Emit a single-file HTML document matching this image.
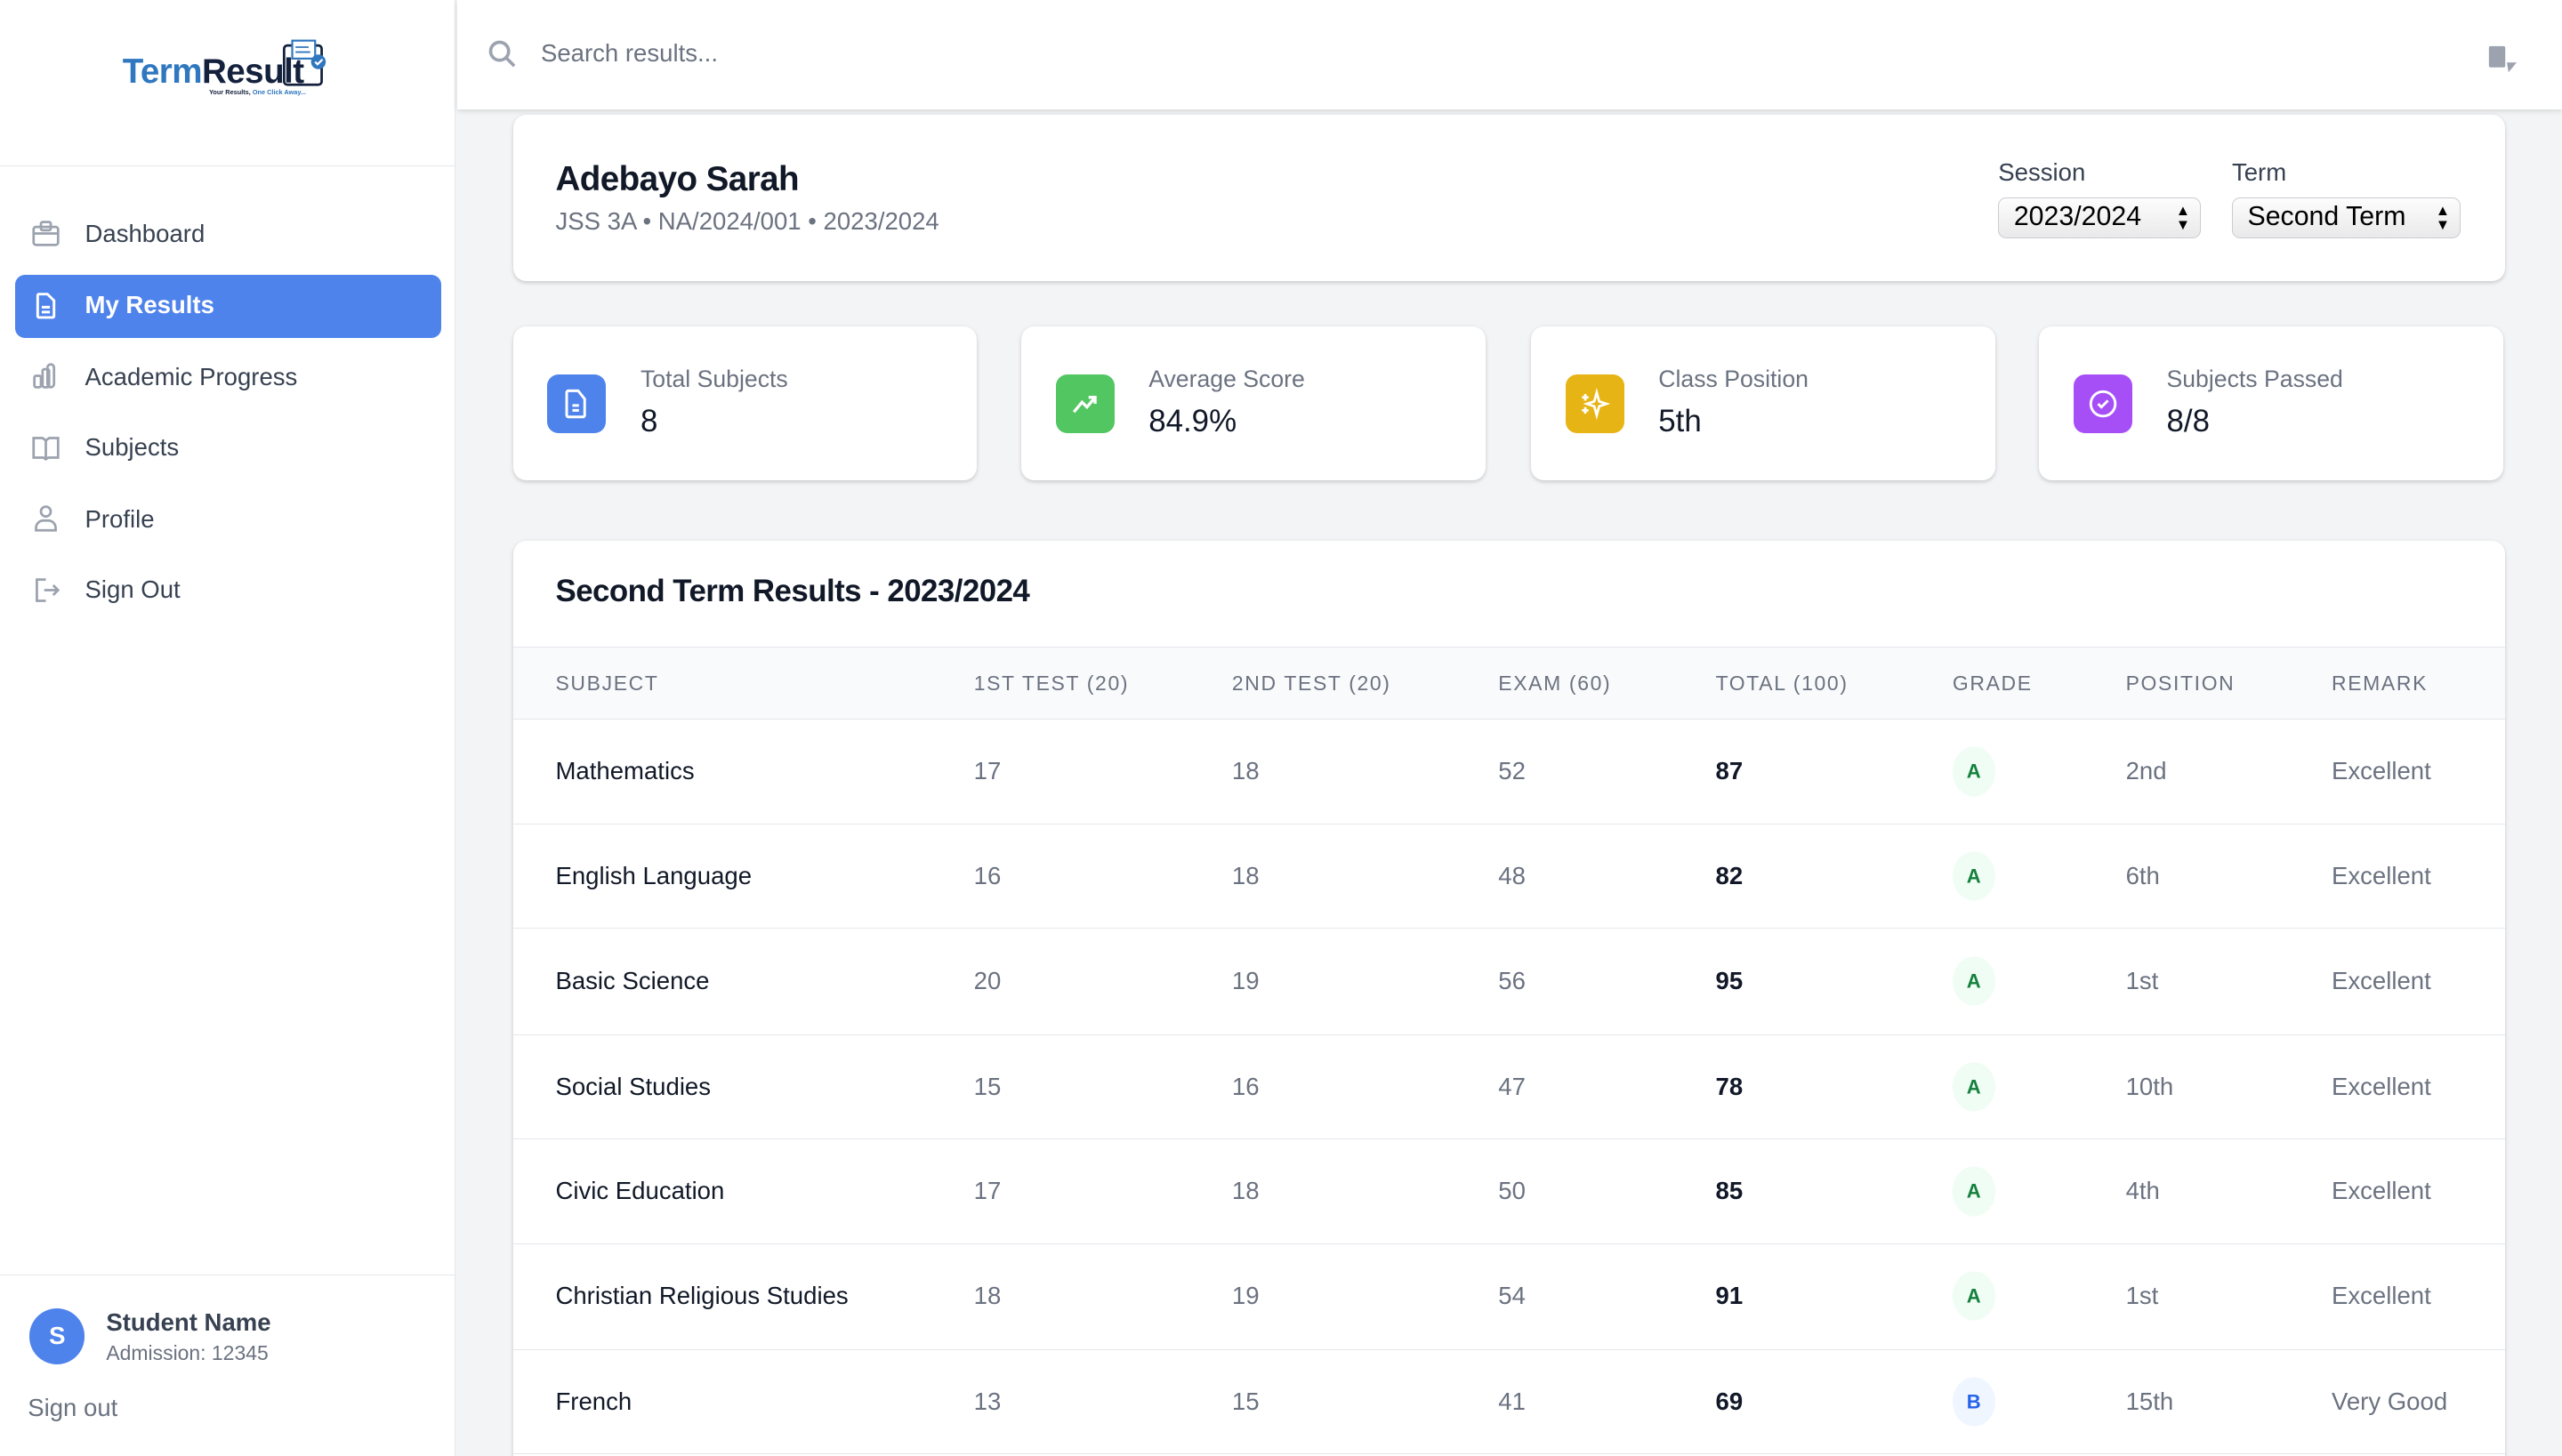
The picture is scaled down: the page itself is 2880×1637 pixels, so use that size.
<!DOCTYPE html>
<html><head><meta charset="utf-8"><style>
*{margin:0;padding:0;box-sizing:border-box}
html,body{width:2880px;height:1636px;overflow:hidden;background:#f3f4f6}
#w{position:absolute;left:0;top:0;width:1568px;height:891px;zoom:1.83673;font-family:"Liberation Sans",sans-serif;background:#f3f4f6;overflow:hidden}
.a{position:absolute;white-space:nowrap}
.side{position:absolute;left:0;top:0;width:279px;height:891px;background:#fff;border-right:1px solid #e5e7eb}
.nav{position:absolute;left:52px;font-size:15px;color:#374151;transform:translateY(-50%)}
.ic{position:absolute;left:19px;width:18px;height:18px}
.card{position:absolute;background:#fff;border-radius:8px;box-shadow:0 1px 3px rgba(0,0,0,.12),0 1px 2px rgba(0,0,0,.06)}
.sq{position:absolute;left:21px;top:29px;width:36px;height:36px;border-radius:7px}
.sl{position:absolute;left:78px;top:24px;font-size:14.5px;color:#6b7280}
.sv{position:absolute;left:78px;top:47px;font-size:19px;color:#111827}
.th{position:absolute;top:411px;font-size:12.5px;color:#6b7280;letter-spacing:.9px}
.row{position:absolute;left:314px;width:1219px;height:64px;border-top:1px solid #e5e7eb;background:#fff}
.c{position:absolute;top:50%;transform:translateY(-50%);font-size:15px;color:#6b7280}
.b{position:absolute;top:50%;width:26px;height:30px;border-radius:50%;transform:translateY(-50%);font-size:12px;font-weight:bold;text-align:center;line-height:30px}
.sel{position:absolute;top:121px;height:25px;border:1px solid #c9ccd1;border-radius:5px;background:linear-gradient(#fdfdfd,#e9e9ea);font-size:16.5px;color:#000;padding:2px 0 0 9px}
</style></head><body><div id="w">

<div class="side">
  <div class="a" style="left:75px;top:32px;font-size:21px;font-weight:bold;letter-spacing:-.3px"><span style="color:#2f77bf">Term</span><span style="color:#14213d">Result</span></div>
  <div class="a" style="left:128px;top:54px;font-size:4px;font-weight:bold;color:#14213d">Your Results, <span style="color:#2f77bf">One Click Away...</span></div>
  <svg class="a" style="left:170px;top:23px" width="32" height="36" viewBox="0 0 32 36"><rect x="4" y="5" width="23" height="24" rx="2" fill="none" stroke="#14213d" stroke-width="1.5"/><rect x="9" y="2" width="14" height="11" fill="#fff" stroke="#2f77bf" stroke-width="1.2"/><path d="M11 6h8M11 9h9" stroke="#2f77bf" stroke-width="1"/><circle cx="25" cy="15" r="4.5" fill="#2f77bf"/><path d="M23 15l1.5 1.5 3-3" stroke="#fff" stroke-width="1.2" fill="none"/></svg>
  <div class="a" style="left:0;top:101px;width:279px;height:1px;background:#e5e7eb"></div>

  <svg class="ic" style="top:134px" viewBox="0 0 18 18" fill="none" stroke="#9ca3af" stroke-width="1.5"><rect x="1.5" y="5" width="15" height="11" rx="1.5"/><rect x="6" y="2" width="6" height="5" rx="1"/><path d="M1.5 9h15"/></svg>
  <div class="nav" style="top:143px">Dashboard</div>
  <div class="a" style="left:9px;top:168px;width:261px;height:39px;background:#4f83ec;border-radius:6px"></div>
  <svg class="ic" style="top:178px" viewBox="0 0 18 18" fill="none" stroke="#fff" stroke-width="1.6"><path d="M4 2h6l4 4v9.5a.8.8 0 0 1-.8.8H4.8a.8.8 0 0 1-.8-.8V2.8A.8.8 0 0 1 4.8 2z"/><path d="M6.5 10h5M6.5 13h5"/></svg>
  <div class="nav" style="top:187px;color:#fff;font-weight:bold">My Results</div>
  <svg class="ic" style="top:221px" viewBox="0 0 18 18" fill="none" stroke="#9ca3af" stroke-width="1.5"><rect x="2" y="9" width="4" height="7" rx="1"/><rect x="7" y="5" width="4" height="11" rx="1"/><rect x="10" y="2" width="4" height="14" rx="2"/></svg>
  <div class="nav" style="top:231px">Academic Progress</div>
  <svg class="ic" style="top:265px" viewBox="0 0 18 18" fill="none" stroke="#9ca3af" stroke-width="1.5"><path d="M1.5 3h5.5l2 1.5 2-1.5h5.5v12h-6l-1.5 1-1.5-1h-6z"/><path d="M9 4.5v11"/></svg>
  <div class="nav" style="top:274px">Subjects</div>
  <svg class="ic" style="top:308px" viewBox="0 0 18 18" fill="none" stroke="#9ca3af" stroke-width="1.5"><circle cx="9" cy="5" r="3"/><path d="M3 16.5v-1.5a4.5 4.5 0 0 1 4.5-4.5h3a4.5 4.5 0 0 1 4.5 4.5v1.5z"/></svg>
  <div class="nav" style="top:318px">Profile</div>
  <svg class="ic" style="top:352px" viewBox="0 0 18 18" fill="none" stroke="#9ca3af" stroke-width="1.5"><path d="M9 2.5H3.5v13H9M8 9h8.5M13.5 6l3 3-3 3"/></svg>
  <div class="nav" style="top:361px">Sign Out</div>

  <div class="a" style="left:0;top:780px;width:279px;height:1px;background:#e5e7eb"></div>
  <div class="a" style="left:18px;top:801px;width:34px;height:34px;border-radius:50%;background:#4f83ec;color:#fff;font-size:15px;font-weight:bold;text-align:center;line-height:34px">S</div>
  <div class="a" style="left:65px;top:801px;font-size:15px;font-weight:bold;color:#374151">Student Name</div>
  <div class="a" style="left:65px;top:821px;font-size:12.5px;color:#6b7280">Admission: 12345</div>
  <div class="a" style="left:17px;top:853px;font-size:15px;color:#6b7280">Sign out</div>
</div>

<div class="a" style="left:280px;top:0;width:1288px;height:67px;background:#fff;box-shadow:0 1px 3px rgba(0,0,0,.12)"></div>
<svg class="a" style="left:297px;top:23px" width="20" height="20" viewBox="0 0 20 20" fill="none" stroke="#9ca3af" stroke-width="2"><circle cx="8.5" cy="8.5" r="5.5"/><path d="M12.5 12.5l5 5"/></svg>
<div class="a" style="left:331px;top:24px;font-size:15px;color:#6b7280">Search results...</div>
<svg class="a" style="left:1522px;top:27px" width="22" height="20" viewBox="0 0 22 20"><rect x="1" y="1" width="10" height="13" rx="1" fill="#9ca3af"/><path d="M12 11h6l-5 6z" fill="#9ca3af"/></svg>

<div class="card" style="left:314px;top:70px;width:1219px;height:102px">
  <div class="a" style="left:26px;top:28px;font-size:21px;font-weight:bold;color:#111827;letter-spacing:-.3px">Adebayo Sarah</div>
  <div class="a" style="left:26px;top:57px;font-size:15px;color:#6b7280">JSS 3A • NA/2024/001 • 2023/2024</div>
  <div class="a" style="left:909px;top:27px;font-size:15px;color:#374151">Session</div>
  <div class="a" style="left:1052px;top:27px;font-size:15px;color:#374151">Term</div>
</div>
<div class="sel" style="left:1223px;width:124px">2023/2024<span style="position:absolute;right:6px;top:3px;font-size:9px;line-height:9px">▲<br>▼</span></div>
<div class="sel" style="left:1366px;width:140px">Second Term<span style="position:absolute;right:6px;top:3px;font-size:9px;line-height:9px">▲<br>▼</span></div>

<div class="card" style="left:314px;top:200px;width:284px;height:94px"><div class="sq" style="background:#4f83ec"><svg width="36" height="36" viewBox="0 0 36 36" fill="none" stroke="#fff" stroke-width="1.6"><path d="M13 10h6l4 5v10a1 1 0 0 1-1 1h-9a1 1 0 0 1-1-1V11a1 1 0 0 1 1-1z"/><path d="M15.5 19h4M15.5 22h4"/></svg></div><div class="sl">Total Subjects</div><div class="sv">8</div></div>
<div class="card" style="left:625px;top:200px;width:284px;height:94px"><div class="sq" style="background:#51c661"><svg width="36" height="36" viewBox="0 0 36 36" fill="none" stroke="#fff" stroke-width="1.8"><path d="M11 23l5-6 3 3 5-6M20 14h4v4"/></svg></div><div class="sl">Average Score</div><div class="sv">84.9%</div></div>
<div class="card" style="left:937px;top:200px;width:284px;height:94px"><div class="sq" style="background:#e6b414"><svg width="36" height="36" viewBox="0 0 36 36" fill="none" stroke="#fff" stroke-width="1.5"><path d="M19 11l1.5 5.5 4.5 1.5-4.5 1.5L19 25l-1.5-5.5-4.5-1.5 4.5-1.5z"/><path d="M12 12v4M10 14h4M12 20v4M10 22h4"/></svg></div><div class="sl">Class Position</div><div class="sv">5th</div></div>
<div class="card" style="left:1248px;top:200px;width:284px;height:94px"><div class="sq" style="background:#a64ff7"><svg width="36" height="36" viewBox="0 0 36 36" fill="none" stroke="#fff" stroke-width="1.6"><circle cx="18" cy="18" r="7.5"/><path d="M15 18l2 2 4-4"/></svg></div><div class="sl">Subjects Passed</div><div class="sv">8/8</div></div>

<div class="card" style="left:314px;top:331px;width:1219px;height:600px"></div>
<div class="a" style="left:340px;top:351px;font-size:19px;font-weight:bold;color:#111827;letter-spacing:-.3px">Second Term Results - 2023/2024</div>
<div class="a" style="left:314px;top:396px;width:1219px;height:45px;background:#f9fafb;border-top:1px solid #e5e7eb"></div>
<div class="th" style="left:340px">SUBJECT</div><div class="th" style="left:596px">1ST TEST (20)</div><div class="th" style="left:754px">2ND TEST (20)</div><div class="th" style="left:917px">EXAM (60)</div><div class="th" style="left:1050px">TOTAL (100)</div><div class="th" style="left:1195px">GRADE</div><div class="th" style="left:1301px">POSITION</div><div class="th" style="left:1427px">REMARK</div>

<div class="row" style="top:440px"><div class="c" style="left:26px;color:#111827">Mathematics</div><div class="c" style="left:282px">17</div><div class="c" style="left:440px">18</div><div class="c" style="left:603px">52</div><div class="c" style="left:736px;color:#111827;font-weight:bold">87</div><div class="b" style="left:881px;background:#f0fdf4;color:#15803d">A</div><div class="c" style="left:987px">2nd</div><div class="c" style="left:1113px">Excellent</div></div>
<div class="row" style="top:504px"><div class="c" style="left:26px;color:#111827">English Language</div><div class="c" style="left:282px">16</div><div class="c" style="left:440px">18</div><div class="c" style="left:603px">48</div><div class="c" style="left:736px;color:#111827;font-weight:bold">82</div><div class="b" style="left:881px;background:#f0fdf4;color:#15803d">A</div><div class="c" style="left:987px">6th</div><div class="c" style="left:1113px">Excellent</div></div>
<div class="row" style="top:568px"><div class="c" style="left:26px;color:#111827">Basic Science</div><div class="c" style="left:282px">20</div><div class="c" style="left:440px">19</div><div class="c" style="left:603px">56</div><div class="c" style="left:736px;color:#111827;font-weight:bold">95</div><div class="b" style="left:881px;background:#f0fdf4;color:#15803d">A</div><div class="c" style="left:987px">1st</div><div class="c" style="left:1113px">Excellent</div></div>
<div class="row" style="top:633px"><div class="c" style="left:26px;color:#111827">Social Studies</div><div class="c" style="left:282px">15</div><div class="c" style="left:440px">16</div><div class="c" style="left:603px">47</div><div class="c" style="left:736px;color:#111827;font-weight:bold">78</div><div class="b" style="left:881px;background:#f0fdf4;color:#15803d">A</div><div class="c" style="left:987px">10th</div><div class="c" style="left:1113px">Excellent</div></div>
<div class="row" style="top:697px"><div class="c" style="left:26px;color:#111827">Civic Education</div><div class="c" style="left:282px">17</div><div class="c" style="left:440px">18</div><div class="c" style="left:603px">50</div><div class="c" style="left:736px;color:#111827;font-weight:bold">85</div><div class="b" style="left:881px;background:#f0fdf4;color:#15803d">A</div><div class="c" style="left:987px">4th</div><div class="c" style="left:1113px">Excellent</div></div>
<div class="row" style="top:761px"><div class="c" style="left:26px;color:#111827">Christian Religious Studies</div><div class="c" style="left:282px">18</div><div class="c" style="left:440px">19</div><div class="c" style="left:603px">54</div><div class="c" style="left:736px;color:#111827;font-weight:bold">91</div><div class="b" style="left:881px;background:#f0fdf4;color:#15803d">A</div><div class="c" style="left:987px">1st</div><div class="c" style="left:1113px">Excellent</div></div>
<div class="row" style="top:826px;border-bottom:1px solid #e5e7eb"><div class="c" style="left:26px;color:#111827">French</div><div class="c" style="left:282px">13</div><div class="c" style="left:440px">15</div><div class="c" style="left:603px">41</div><div class="c" style="left:736px;color:#111827;font-weight:bold">69</div><div class="b" style="left:881px;background:#eff6ff;color:#2563eb">B</div><div class="c" style="left:987px">15th</div><div class="c" style="left:1113px">Very Good</div></div>

</div></body></html>
